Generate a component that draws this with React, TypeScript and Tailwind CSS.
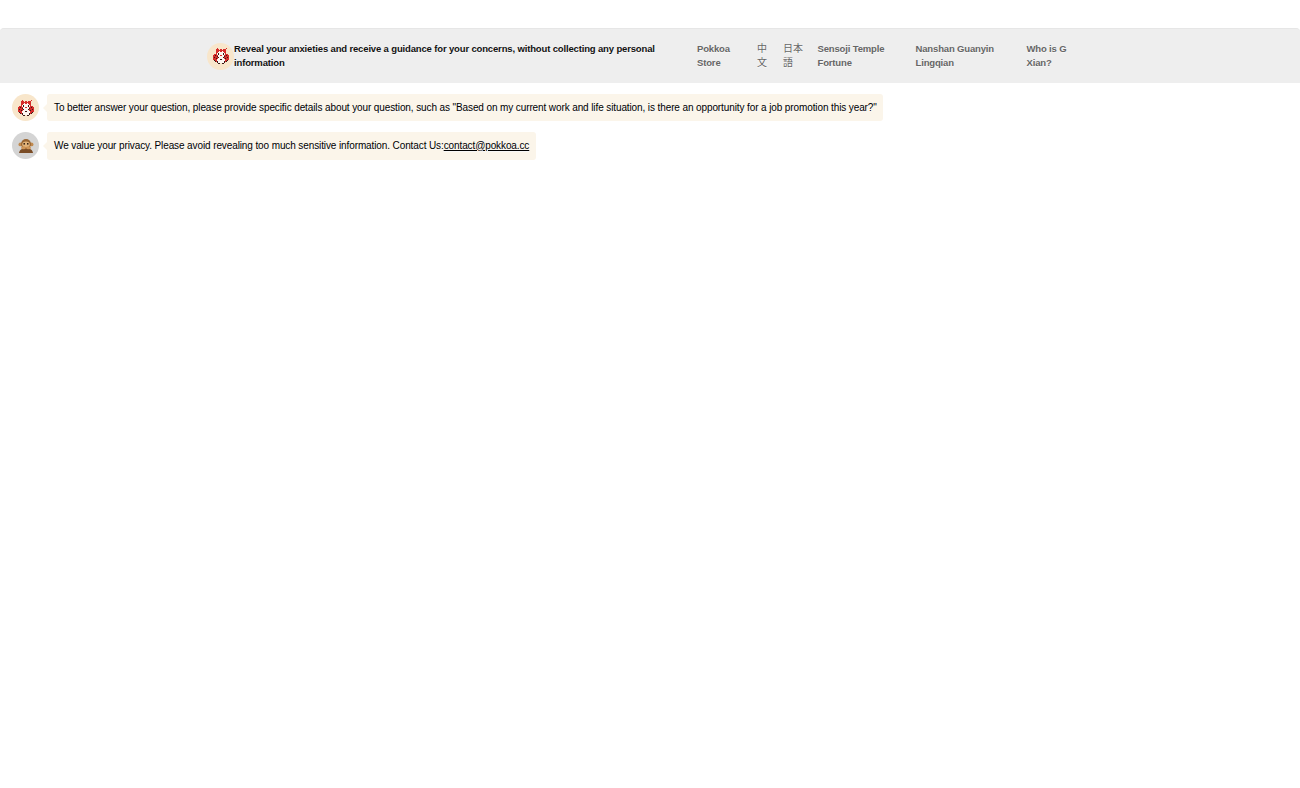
const sans = "font-['Liberation_Sans','Noto_Sans_CJK_JP',sans-serif]";

const FOX = [
  "....R........R..",
  "...RRR.RR.RRR...",
  "...RRRRRRRRRR...",
  "...RRRWRRWRRR...",
  "...RRWWWWWWRR...",
  "...RWDWWWWDWR...",
  ".RRRWDWWWWDWRRR.",
  "RRDRRWWRRWWRRDRR",
  "RRRRDWWWWWWDRRRR",
  "RDRRRDWWWWDRRRDR",
  "RRRDRWWWWWWRDRRR",
  "RRRRWWWDDWWWRRRR",
  ".DRRWWWWWWWWRRD.",
  "..DRDWWWWWWDRD..",
  "....DWWWWWWD....",
  ".....DD..DD.....",
];
const COLORS: Record<string, string> = { R: "#d62d2a", W: "#fdf6f0", D: "#3a1a17" };

function FoxIcon() {
  return (
    <svg viewBox="0 0 16 16" className="w-[16px] h-[16px]" shapeRendering="crispEdges">
      {FOX.flatMap((row, y) =>
        row.split("").map((c, x) =>
          c === "." ? null : <rect key={`${x}-${y}`} x={x} y={y} width="1" height="1" fill={COLORS[c]} />
        )
      )}
    </svg>
  );
}

function MonkeyIcon() {
  return (
    <svg viewBox="0 0 16 14" className="w-[16px] h-[14px]">
      <circle cx="2.400" cy="5.400" r="1.900" fill="#c08a50" />
      <circle cx="13.600" cy="5.400" r="1.900" fill="#c08a50" />
      <circle cx="8" cy="5" r="5" fill="#9a6633" />
      <ellipse cx="8" cy="5.400" rx="3.800" ry="2.900" fill="#e0b27a" />
      <rect x="5.500" y="4" width="1.500" height="1.600" fill="#3a2415" />
      <rect x="9" y="4" width="1.500" height="1.600" fill="#3a2415" />
      <path d="M1 14c.4-3 3-5 7-5s6.600 2 7 5z" fill="#7a4c25" />
      <ellipse cx="5.500" cy="8.800" rx="2.500" ry="1.500" fill="#cf9558" />
      <ellipse cx="10.500" cy="8.800" rx="2.500" ry="1.500" fill="#cf9558" />
    </svg>
  );
}

function Message({ avatar, tone, height, children }: { avatar: React.ReactNode; tone: string; height: string; children: React.ReactNode }) {
  return (
    <div className="flex items-start h-[28px]">
      <div className={`w-[27px] h-[27px] rounded-full flex items-center justify-center shrink-0 ${tone}`}>{avatar}</div>
      <div className={`relative ml-[8px] flex items-center pl-[7px] pr-[6.5px] rounded-[3px] bg-[#fbf5ea] text-[10px] tracking-[-0.108px] text-black whitespace-nowrap [text-shadow:0_1px_0_#f8f8f8] ${height}`}>
        <span className="absolute left-[-4px] top-[10px] w-0 h-0 border-y-[4px] border-y-transparent border-r-[4px] border-r-[#fbf5ea]" />
        <span>{children}</span>
      </div>
    </div>
  );
}

export default function App() {
  const links = [
    { label: "Pokkoa Store", className: "w-[46px] mr-[14px] font-bold tracking-[-0.15px] text-[9.5px]" },
    { label: "中文", className: "w-[12px] mr-[14px] font-normal text-[10px] text-[#555]" },
    { label: "日本語", className: "w-[20px] mr-[14.5px] font-normal text-[10px] text-[#555]" },
    { label: "Sensoji Temple Fortune", className: "w-[84px] mr-[14px] font-bold tracking-[-0.15px] text-[9.5px]" },
    { label: "Nanshan Guanyin Lingqian", className: "w-[97px] mr-[14px] font-bold tracking-[-0.15px] text-[9.5px]" },
    { label: "Who is G Xian?", className: "w-[44px] font-bold tracking-[-0.15px] text-[9.5px]" },
  ];

  return (
    <div className={`min-h-[788px] bg-white ${sans}`}>
      <header className="mt-[28px] h-[55px] bg-[#eeeeee] rounded-t-[4px] border-t border-[#e6e6e6] flex items-center">
        <div className="w-[886px] mx-auto flex items-center [text-shadow:0_1px_0_#f8f8f8]">
          <div className="w-[27px] h-[27px] rounded-full bg-[#f8e6cb] flex items-center justify-center shrink-0">
            <FoxIcon />
          </div>
          <h1 className="w-[463px] shrink-0 text-[9.5px] tracking-[-0.15px] leading-[14px] font-bold text-[#111]">
            Reveal your anxieties and receive a guidance for your concerns, without collecting any personal information
          </h1>
          <nav className="flex items-center">
            {links.map((l) => (
              <a key={l.label} className={`${l.className} leading-[14px] text-[#666]`}>
                {l.label}
              </a>
            ))}
          </nav>
        </div>
      </header>

      <main className="pt-[11px] pl-[12px] flex flex-col gap-[10px]">
        <Message tone="bg-[#f8e6cb]" height="h-[27px]" avatar={<FoxIcon />}>
          To better answer your question, please provide specific details about your question, such as "Based on my current work and life situation, is there an opportunity for a job promotion this year?"
        </Message>
        <Message tone="bg-[#d4d4d4]" height="h-[28px] pb-[2px]" avatar={<MonkeyIcon />}>
          We value your privacy. Please avoid revealing too much sensitive information. Contact Us:
          <a className="underline text-black">contact@pokkoa.cc</a>
        </Message>
      </main>
    </div>
  );
}
